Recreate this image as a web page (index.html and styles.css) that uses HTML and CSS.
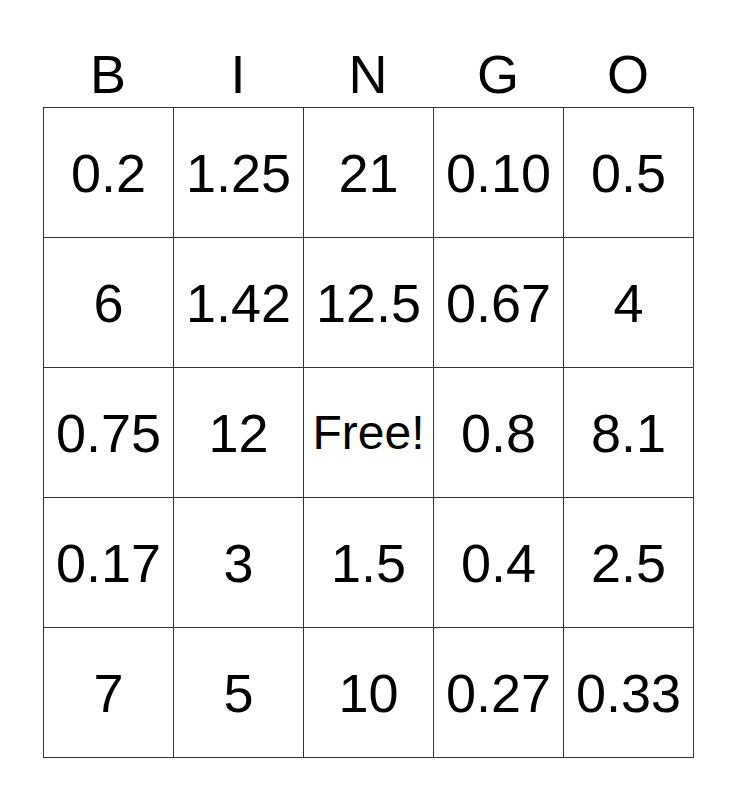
FILE: index.html
```html
<!DOCTYPE html>
<html>
<head>
<meta charset="utf-8">
<link rel="stylesheet" href="styles.css">
</head>
<body>
<div class="card">
  <div class="head">
    <div>B</div><div>I</div><div>N</div><div>G</div><div>O</div>
  </div>
  <div class="grid">
    <div class="cell">0.2</div><div class="cell">1.25</div><div class="cell">21</div><div class="cell">0.10</div><div class="cell">0.5</div>
    <div class="cell">6</div><div class="cell">1.42</div><div class="cell">12.5</div><div class="cell">0.67</div><div class="cell">4</div>
    <div class="cell">0.75</div><div class="cell">12</div><div class="cell free">Free!</div><div class="cell">0.8</div><div class="cell">8.1</div>
    <div class="cell">0.17</div><div class="cell">3</div><div class="cell">1.5</div><div class="cell">0.4</div><div class="cell">2.5</div>
    <div class="cell">7</div><div class="cell">5</div><div class="cell">10</div><div class="cell">0.27</div><div class="cell">0.33</div>
  </div>
</div>
</body>
</html>
```
FILE: styles.css
```css
html, body {
  margin: 0;
  background: #fff;
}
.card {
  padding: 41px 0 0 43px;
  font-family: "Liberation Sans", Arial, sans-serif;
  color: #000;
}
.head {
  display: grid;
  grid-template-columns: repeat(5, 130px);
  height: 66px;
  width: 651px;
  font-size: 54px;
}
.head div {
  display: flex;
  align-items: center;
  justify-content: center;
}
.grid {
  display: grid;
  grid-template-columns: repeat(5, 129px);
  grid-auto-rows: 129px;
  gap: 1px;
  padding: 1px;
  background: #333;
  width: 649px;
}
.cell {
  background: #fff;
  display: flex;
  align-items: center;
  justify-content: center;
  font-size: 54px;
  white-space: nowrap;
}
.cell.free {
  font-size: 48px;
}
```
